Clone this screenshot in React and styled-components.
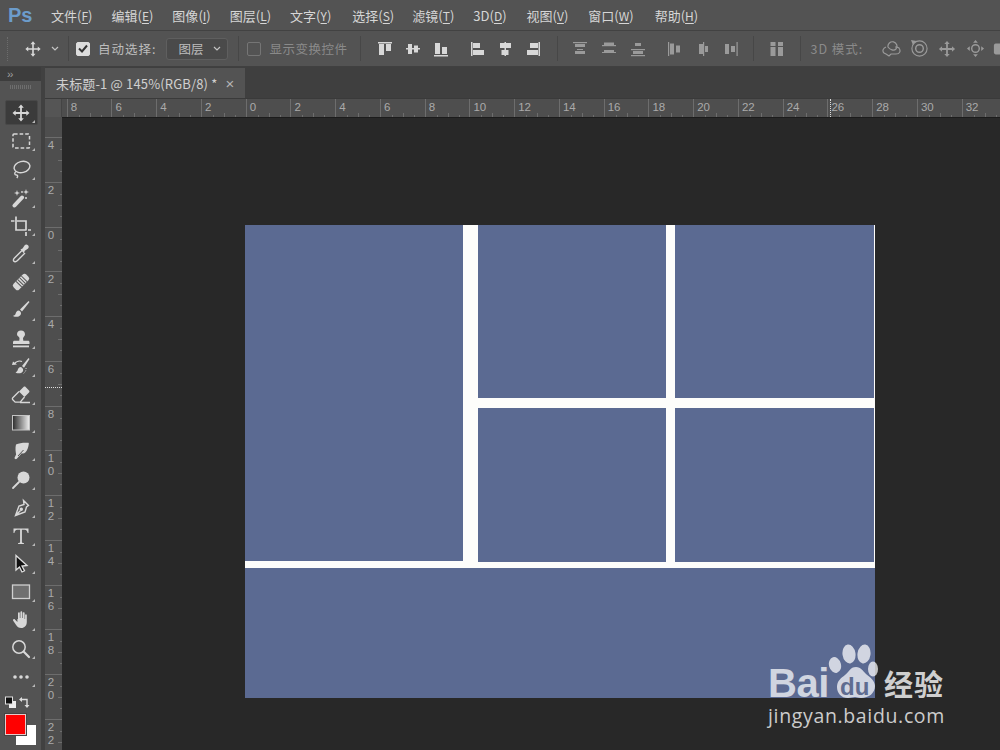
import React from 'react';
import styled, { createGlobalStyle } from 'styled-components';

const GlobalStyle = createGlobalStyle`
  html, body { margin: 0; padding: 0; background: #282828; }
  body { font-family: "Noto Sans CJK SC", "Liberation Sans", sans-serif; }
`;

const Window = styled.div`
  width: 1000px;
  height: 750px;
  position: relative;
  overflow: hidden;
  display: flex;
  flex-direction: column;
  background: #414141;
`;

// top menu
const MenuBar = styled.div`
  height: 31px;
  flex: none;
  display: flex;
  align-items: center;
  background: #535353;
  border-bottom: 1px solid #424242;
  box-sizing: border-box;
`;

const Logo = styled.div`
  width: 51px;
  padding-left: 8px;
  box-sizing: border-box;
  font: bold 20px "Liberation Sans", sans-serif;
  color: #6c9ccb;
`;

const MenuItem = styled.span`
  margin-right: ${(p) => p.$gap}px;
  font-size: 13px;
  color: #d6d6d6;
  white-space: nowrap;
  u { text-underline-offset: 2px; font-size: 12px; }
`;

// options row
const OptionsBar = styled.div`
  height: 36px;
  flex: none;
  display: flex;
  align-items: center;
  background: #535353;
  border-bottom: 1px solid #404040;
  box-sizing: border-box;
  overflow: hidden;
`;

const Grip = styled.div`
  width: 1px;
  height: 24px;
  margin: 0 16px 0 7px;
  border-left: 1px dotted #6c6c6c;
`;

const OptionIcon = styled.svg`
  flex: none;
  width: ${(p) => p.$w || 16}px;
  height: ${(p) => p.$h || 16}px;
  margin-right: ${(p) => p.$mr || 0}px;
  color: ${(p) => (p.$dim ? '#9a9a9a' : '#d8d8d8')};
`;

const Caret = styled.svg`
  flex: none;
  width: 8px;
  height: 5px;
  margin-right: ${(p) => p.$mr || 0}px;
  color: #c4c4c4;
`;

const Sep = styled.div`
  flex: none;
  width: 1px;
  height: 25px;
  margin-right: ${(p) => p.$mr}px;
  background: #474747;
`;

const CheckBox = styled.div`
  flex: none;
  width: 14px;
  height: 14px;
  margin-right: ${(p) => p.$mr}px;
  border-radius: 2px;
  display: flex;
  align-items: center;
  justify-content: center;
  box-sizing: border-box;
  background: ${(p) => (p.$on ? '#dcdcdc' : 'transparent')};
  border: 1px solid ${(p) => (p.$on ? '#dcdcdc' : '#757575')};
`;

const OptionLabel = styled.span`
  flex: none;
  margin-right: ${(p) => p.$mr}px;
  font-size: 12.5px;
  letter-spacing: ${(p) => p.$sp || 0}px;
  white-space: nowrap;
  color: ${(p) => (p.$dim ? '#8a8a8a' : '#bdbdbd')};
`;

const LayerSelect = styled.div`
  flex: none;
  width: 62px;
  height: 22px;
  margin-right: 10px;
  padding: 0 6px 0 11px;
  box-sizing: border-box;
  display: flex;
  align-items: center;
  justify-content: space-between;
  background: #4a4a4a;
  border: 1px solid #5f5f5f;
  border-radius: 3px;
  font-size: 12.5px;
  color: #bdbdbd;
`;

// below the options
const Body = styled.div`
  flex: 1;
  min-height: 0;
  display: flex;
`;

const ToolPanel = styled.div`
  width: 41px;
  flex: none;
  margin-right: 4px;
  display: flex;
  flex-direction: column;
  background: #535353;
`;

const PanelHead = styled.div`
  height: 14px;
  flex: none;
  padding-left: 7px;
  background: #3d3d3d;
  font: 11px/14px "Liberation Sans", sans-serif;
  letter-spacing: -1px;
  color: #a0a0a0;
`;

const PanelGrip = styled.div`
  height: 4px;
  margin: 4px 10px 10px;
  flex: none;
  background: repeating-linear-gradient(90deg, #6e6e6e 0 1px, transparent 1px 2px);
`;

const ToolButton = styled.div`
  height: 28.2px;
  flex: none;
  position: relative;
  display: flex;
  align-items: center;
  justify-content: center;
  color: #d8d8d8;
  &::before {
    content: '';
    position: absolute;
    left: 5px;
    right: 3px;
    top: 1px;
    bottom: 2px;
    border-radius: 2px;
    background: ${(p) => (p.$active ? '#3b3b3b' : 'transparent')};
    border: ${(p) => (p.$active ? '1px solid #484848' : 'none')};
  }
  &::after {
    content: '';
    position: absolute;
    right: 6px;
    bottom: 4px;
    border-style: solid;
    border-width: 0 0 3px 3px;
    border-color: transparent transparent ${(p) => (p.$corner ? '#b8b8b8' : 'transparent')} transparent;
  }
`;

const ToolIcon = styled.svg`
  position: relative;
  width: 20px;
  height: 20px;
`;

const SwatchArea = styled.div`
  margin-top: 5px;
  padding: 0 5px;
  display: flex;
  flex-direction: column;
`;

const SwatchTop = styled.div`
  height: 16px;
  display: flex;
  justify-content: space-between;
  padding-right: 5px;
`;

const SwatchStack = styled.div`
  position: relative;
  margin-top: 2px;
  width: 32px;
  height: 32px;
`;

const ForeSwatch = styled.div`
  position: absolute;
  left: 0;
  top: 0;
  z-index: 1;
  width: 21px;
  height: 21px;
  box-sizing: border-box;
  background: #ff0000;
  border: 1px solid #e8c8c8;
  outline: 1px solid #444;
`;

const BackSwatch = styled.div`
  position: absolute;
  left: 11px;
  top: 11px;
  width: 20px;
  height: 20px;
  background: #ffffff;
`;

const DocColumn = styled.div`
  flex: 1;
  min-width: 0;
  display: flex;
  flex-direction: column;
`;

const TabBar = styled.div`
  height: 32px;
  flex: none;
  display: flex;
  background: #3f3f3f;
  box-sizing: border-box;
  padding-top: 1px;
  border-bottom: 1px solid #3a3a3a;
`;

const Tab = styled.div`
  width: 200px;
  height: 30px;
  padding-left: 11px;
  box-sizing: border-box;
  display: flex;
  align-items: center;
  background: #535353;
  font-size: 13px;
  letter-spacing: 0.15px;
  color: #d0d0d0;
  white-space: nowrap;
`;

const TabClose = styled.span`
  margin-left: 8px;
  font: 15px "Liberation Sans", sans-serif;
  color: #b4b4b4;
`;

const RulerRow = styled.div`
  height: 18px;
  flex: none;
  display: flex;
  background: #4e4e4e;
  overflow: hidden;
  position: relative;
`;

const RulerCorner = styled.div`
  width: 17px;
  flex: none;
  margin-right: 4.7px;
  background: #555555;
  border-right: 1px solid #444;
  box-sizing: border-box;
`;

const RulerCell = styled.div`
  width: 44.75px;
  flex: none;
  box-sizing: border-box;
  padding: 1px 0 0 3px;
  border-left: 1px solid #6d6d6d;
  font: 11.5px/14px "Liberation Sans", sans-serif;
  color: #aaaaaa;
  background:
    linear-gradient(#6d6d6d, #6d6d6d) 11px 100% / 1px 2px no-repeat,
    linear-gradient(#6d6d6d, #6d6d6d) 22px 100% / 1px 4px no-repeat,
    linear-gradient(#6d6d6d, #6d6d6d) 33px 100% / 1px 2px no-repeat;
`;

const CursorMarkX = styled.div`
  position: absolute;
  left: 785px;
  top: 0;
  bottom: 0;
  border-left: 1px dotted #dddddd;
`;

const DocBody = styled.div`
  flex: 1;
  min-height: 0;
  display: flex;
`;

const SideRuler = styled.div`
  width: 17px;
  flex: none;
  padding-top: 20px;
  box-sizing: border-box;
  position: relative;
  background: #4e4e4e;
  overflow: hidden;
`;

const SideCell = styled.div`
  height: 44.75px;
  box-sizing: border-box;
  padding: 1px 0 0 2px;
  border-top: 1px solid #6d6d6d;
  font: 11.5px/13px "Liberation Sans", sans-serif;
  color: #aaaaaa;
  width: 17px;
  background:
    linear-gradient(#6d6d6d, #6d6d6d) 100% 11px / 2px 1px no-repeat,
    linear-gradient(#6d6d6d, #6d6d6d) 100% 22px / 4px 1px no-repeat,
    linear-gradient(#6d6d6d, #6d6d6d) 100% 33px / 2px 1px no-repeat;
  span { display: block; width: 8px; text-align: center; }
`;

const CursorMarkY = styled.div`
  position: absolute;
  left: 0;
  right: 0;
  top: 270px;
  border-top: 1px dotted #dddddd;
`;

const Workspace = styled.div`
  flex: 1;
  min-width: 0;
  padding: 107px 0 0 183px;
  box-sizing: border-box;
  background: #282828;
  border-top: 1px solid #1c1c1c;
`;

// the document: blue panels on white
const Canvas = styled.div`
  width: 630px;
  height: 473px;
  display: grid;
  grid-template-columns: 218px 15px 188px 9px 199px 1px;
  grid-template-rows: 173px 10px 154px 6px 130px;
  background: #fdfdfb;
`;

const Panel = styled.div`
  grid-column: ${(p) => p.$col};
  grid-row: ${(p) => p.$row};
  margin-bottom: ${(p) => p.$mb || 0}px;
  background: #5b6a92;
`;

// watermark
const Watermark = styled.div`
  position: absolute;
  left: 768px;
  top: 644px;
  width: 180px;
  height: 84px;
  color: rgba(255, 255, 255, 0.72);
`;

const WordBai = styled.span`
  position: absolute;
  left: 0;
  top: 17px;
  font: bold 40px/44px "Liberation Sans", sans-serif;
  letter-spacing: -0.5px;
`;

const Paw = styled.svg`
  position: absolute;
  left: 60px;
  top: 0;
  width: 50px;
  height: 56px;
`;

const WordDu = styled.span`
  position: absolute;
  left: 72px;
  top: 30px;
  font: bold 24px/26px "Liberation Sans", sans-serif;
  color: #5f6c90;
`;

const WordCn = styled.span`
  position: absolute;
  left: 116px;
  top: 19px;
  font: bold 29px/40px "Noto Sans CJK SC", sans-serif;
  letter-spacing: 1px;
  color: #cfcfcf;
  white-space: nowrap;
`;

const WordUrl = styled.span`
  position: absolute;
  left: 0;
  top: 60px;
  font: 19.5px/24px "Open Sans", "Liberation Sans", sans-serif;
  letter-spacing: 0.65px;
  color: #cccccc;
  white-space: nowrap;
`;

const menus = [
  ['文件', 'F', 19], ['编辑', 'E', 19], ['图像', 'I', 19], ['图层', 'L', 19], ['文字', 'Y', 21],
  ['选择', 'S', 18], ['滤镜', 'T', 19], ['3D', 'D', 20], ['视图', 'V', 20], ['窗口', 'W', 21], ['帮助', 'H', 0],
];

const fill = 'currentColor';

const MoveGlyph = () => (
  <path fill={fill} d="M10 1.5l2.8 3.2h-1.9v4.4h4.4V7.2L18.5 10l-3.2 2.8v-1.9h-4.4v4.4h1.9L10 18.5l-2.8-3.2h1.9v-4.4H4.7v1.9L1.5 10l3.2-2.8v1.9h4.4V4.7H7.2z" />
);

const tools = [
  { key: 'move', active: true, draw: <MoveGlyph /> },
  { key: 'marquee', draw: <rect x="2" y="3" width="16.500" height="14" rx="1" fill="none" stroke={fill} strokeWidth="1.5" strokeDasharray="3.6 2" /> },
  {
    key: 'lasso',
    draw: (
      <g fill="none" stroke={fill} strokeWidth="1.4">
        <ellipse cx="11" cy="8" rx="8" ry="5.6" transform="rotate(-14 11 8)" />
        <path d="M5 12.5c-2 1.5-1.5 3.5.5 3.5 1.500 0 1.500 1.500.3 3" />
      </g>
    ),
  },
  {
    key: 'wand',
    draw: (
      <g>
        <path d="M3.500 17.500L11 9.500" stroke={fill} strokeWidth="4" strokeLinecap="round" />
        <path fill={fill} d="M6 2l.7 2.300L9 5l-2.300.7L6 8l-.7-2.300L3 5l2.300-.7zM15 1l.7 2.300L18 4l-2.300.7L15 7l-.7-2.300L12 4l2.300-.7z" />
        <circle cx="11" cy="4" r=".9" fill={fill} />
        <circle cx="15" cy="10" r="1" fill={fill} />
      </g>
    ),
  },
  {
    key: 'crop',
    draw: <path fill="none" stroke={fill} strokeWidth="1.700" d="M0 5h3.500M5 .5V14h10M6 5h9v9.500M15 16v4M17 14h3" />,
  },
  {
    key: 'dropper',
    draw: (
      <g>
        <path fill="none" stroke={fill} strokeWidth="1.400" d="M11 6.500L3.500 14c-1.500 1.500-1.500 3 0 3.500 1 .5 2 0 3-1L14 9" />
        <path fill={fill} d="M9.500 5.500l2-1 2-3c1-1.200 2.500-1.200 3.500-.2s1 2.500-.2 3.500l-3 2-1 2.500z" />
      </g>
    ),
  },
  {
    key: 'heal',
    draw: (
      <g transform="rotate(-45 10 10)">
        <rect x="1" y="6" width="18" height="8" rx="2.500" fill={fill} />
        <path stroke="#535353" strokeWidth="1" d="M7 6v8M9.500 6v8M12 6v8M14.500 6v8" />
      </g>
    ),
  },
  {
    key: 'brush',
    draw: (
      <g fill={fill}>
        <path d="M17.500 1L9 9.500l2 2L18.500 2z" />
        <path d="M8 10.500c-2.500 0-3 2-3.500 3.500-.3 1-1.500 1.500-2.500 2 2.500 1.500 6 1 7.500-1 1-1.500.8-3.200-1.500-4.500z" />
      </g>
    ),
  },
  {
    key: 'stamp',
    draw: (
      <g fill={fill}>
        <path d="M10 1.500c2.500 0 4 1.700 4 3.700 0 1.700-1.500 2.500-2 4l.3 2.500h4.700c1 0 1.500.6 1.500 1.500V15H2v-1.800c0-.9.500-1.500 1.500-1.500h4.800L8.500 9c-.5-1.500-2.500-2-2.500-3.800 0-2 1.500-3.700 4-3.700z" />
        <rect x="2" y="16.500" width="16" height="1.800" />
      </g>
    ),
  },
  {
    key: 'history',
    draw: (
      <g>
        <path fill="none" stroke={fill} strokeWidth="1.200" d="M3 7c2.500-3 6-3.500 8-2.500" />
        <path fill={fill} d="M1 8l1-3.500L6 7.500zM17.500 1L11 9l2 1.800L18.500 2z" />
        <path fill={fill} d="M10 10c-2 0-3 1.500-3.300 3-.2 1-1 1.800-2.200 2.500 2.500 1.500 6 1 7.300-1 .8-1.500.5-3.300-1.800-4.500z" />
        <path fill="none" stroke={fill} strokeWidth="1" strokeDasharray="1 1.500" d="M15 11c.5 2-1 5-3.500 6" />
      </g>
    ),
  },
  {
    key: 'eraser',
    draw: (
      <g>
        <path fill={fill} d="M8 6.500l4.500-4.500c.6-.6 1.500-.6 2.100 0l3.400 3.400c.6.6.6 1.500 0 2.100L13.500 12z" />
        <path fill="none" stroke={fill} strokeWidth="1.300" d="M8 6.500L1.800 12.700c-.6.6-.6 1.500 0 2.100l2.400 2.400h5L13.500 12M9 17.500h10" />
      </g>
    ),
  },
  {
    key: 'gradient',
    draw: (
      <g>
        <defs>
          <linearGradient id="gradTool" x1="0" x2="1" y1="0" y2="0">
            <stop offset="0" stopColor="#2c2c2c" />
            <stop offset="1" stopColor="#f0f0f0" />
          </linearGradient>
        </defs>
        <rect x="1.500" y="2.500" width="17" height="14.500" fill="url(#gradTool)" stroke="#c4c4c4" strokeWidth="1" />
      </g>
    ),
  },
  {
    key: 'smudge',
    draw: (
      <g fill={fill}>
        <path d="M5 3.500c3-1.500 7-2 12-1.800.8 0 1 .6.8 1.300-.4 3-1.300 6.300-3.500 8.500-1 1-2.300 1.300-3.500.8l-5 5.500c-.6.700-1.400.6-1.900 0-.5-.5-.4-1.200 0-1.800l1.200-2.500C4.700 10.500 4 7.500 5 3.500z" />
        <path stroke="#535353" strokeWidth="1" fill="none" d="M7 15l5.500-6" />
      </g>
    ),
  },
  {
    key: 'dodge',
    draw: (
      <g>
        <circle cx="12.500" cy="7.500" r="6" fill={fill} />
        <path stroke={fill} strokeWidth="1.800" strokeLinecap="round" d="M8 12l-6 6" />
      </g>
    ),
  },
  {
    key: 'pen',
    draw: (
      <g fill="none" stroke={fill} strokeWidth="1.400">
        <path d="M12.500 2.500l5 5-2 1.500-1.500 5-9.500 3.500 3.500-9.500 5-1.500zM4.500 17.500l5-5" />
        <circle cx="10.300" cy="11.300" r="1" fill={fill} />
      </g>
    ),
  },
  {
    key: 'type',
    draw: <path fill={fill} stroke="none" d="M2.500 2.500h15v4.500h-.9c-.3-2-1-3.300-3-3.300h-2.700v12.200c0 .8.600 1 2 1.100V18H7.100v-1c1.400-.1 2-.3 2-1.100V3.700H6.400c-2 0-2.700 1.300-3 3.300h-.9z" />,
  },
  {
    key: 'path',
    draw: <path fill="#111" stroke="#e0e0e0" strokeWidth="1.300" d="M5 1.500v14.500l3.500-3 2.500 5 2.500-1.200-2.500-4.800 5-.5z" />,
  },
  {
    key: 'shape',
    draw: <rect x="1.500" y="3" width="17" height="13.500" fill="#6f6f6f" stroke="#cfcfcf" strokeWidth="1.300" />,
  },
  {
    key: 'hand',
    draw: (
      <path fill={fill} d="M7 9V3.300c0-1.300 1.800-1.300 1.800 0V8h.6V2.300c0-1.300 1.800-1.300 1.800 0V8h.6V3.200c0-1.300 1.800-1.300 1.800 0V9h.5V5.300c0-1.300 1.700-1.300 1.700 0V12c0 3.500-2.300 6-5.500 6-2.700 0-4-1-5.200-3L2.200 10.700c-.7-1.200.8-2.200 1.700-1.200L6.400 12V9z" />
    ),
  },
  {
    key: 'zoom',
    draw: (
      <g fill="none" stroke={fill}>
        <circle cx="8" cy="8" r="6.200" strokeWidth="1.500" />
        <path strokeWidth="2.200" strokeLinecap="round" d="M12.800 12.800l5.200 5.200" />
      </g>
    ),
  },
  {
    key: 'more',
    draw: (
      <g fill={fill}>
        <circle cx="4" cy="10" r="1.800" />
        <circle cx="10" cy="10" r="1.800" />
        <circle cx="16" cy="10" r="1.800" />
      </g>
    ),
  },
];

// align / distribute buttons, each drawn from a handful of bars: [x, y, w, h]
const alignGroups = [
  [
    { mr: 12, w: 16, bars: [[1, 1, 14, 1.500], [2, 3, 5, 11], [9, 3, 5, 7]] },
    { mr: 12, w: 16, bars: [[1, 7, 14, 1.500], [3, 3, 4, 10], [9, 4.500, 4, 7]] },
    { mr: 21, w: 16, bars: [[1, 14, 14, 1.500], [2, 2, 5, 11], [9, 6, 5, 7]] },
  ],
  [
    { mr: 13, w: 15, bars: [[1, 1, 1.500, 14], [3, 2, 7, 5], [3, 9, 11, 5]] },
    { mr: 13, w: 15, bars: [[6.500, 1, 1.500, 14], [2, 2, 11, 5], [3.500, 9, 7, 5]] },
    { mr: 16, w: 15, bars: [[12.500, 1, 1.500, 14], [4, 2, 8, 5], [1, 9, 11, 5]] },
  ],
  [
    { mr: 13, w: 16, dim: true, bars: [[1, 1, 14, 1.200], [3, 3, 10, 3], [3, 10, 10, 3], [5, 8, 6, 1]] },
    { mr: 13, w: 16, dim: true, bars: [[1, 4, 14, 1.200], [3, 1.500, 10, 2.500], [3, 9, 10, 3], [1, 11, 14, 1]] },
    { mr: 21, w: 16, dim: true, bars: [[5, 2, 6, 3], [1, 8, 14, 1.200], [3, 10, 10, 3], [1, 14, 14, 1.200]] },
  ],
  [
    { mr: 14, w: 15, dim: true, bars: [[1, 1, 1.200, 14], [3, 2.500, 4, 11], [9, 4.500, 4, 7]] },
    { mr: 13, w: 15, dim: true, bars: [[3, 3, 4, 10], [7, 1, 1.200, 14], [9, 5, 3, 6]] },
    { mr: 14, w: 15, dim: true, bars: [[1, 3, 4, 10], [7, 5, 4, 6], [12.500, 1, 1.200, 14]] },
  ],
];

const AlignButton = ({ item }) => (
  <OptionIcon viewBox={`0 0 ${item.w} 16`} $w={item.w} $mr={item.mr} $dim={item.dim}>
    {item.bars.map((b, i) => (
      <rect key={i} x={b[0]} y={b[1]} width={b[2]} height={b[3]} fill="currentColor" />
    ))}
  </OptionIcon>
);

const DownCaret = ({ mr }) => (
  <Caret viewBox="0 0 8 5" $mr={mr}>
    <path d="M1 1l3 3 3-3" fill="none" stroke="currentColor" strokeWidth="1.200" />
  </Caret>
);

const hLabels = [8, 6, 4, 2, 0, 2, 4, 6, 8, 10, 12, 14, 16, 18, 20, 22, 24, 26, 28, 30, 32];
const vLabels = ['4', '2', '0', '2', '4', '6', '8', '10', '12', '14', '16', '18', '20', '22'];

const App = () => {
  return (
    <Window>
      <GlobalStyle />
      <MenuBar>
        <Logo>Ps</Logo>
        {menus.map(([name, key, gap]) => (
          <MenuItem key={name} $gap={gap}>
            {name}(<u>{key}</u>)
          </MenuItem>
        ))}
      </MenuBar>

      <OptionsBar>
        <Grip />
        <OptionIcon viewBox="0 0 20 20" $w={18} $h={18} $mr={9}>
          <MoveGlyph />
        </OptionIcon>
        <DownCaret mr={9} />
        <Sep $mr={7} />
        <CheckBox $on $mr={8}>
          <svg width="10" height="9" viewBox="0 0 10 9">
            <path d="M1 4.500l3 3 5-6" fill="none" stroke="#333" strokeWidth="2" />
          </svg>
        </CheckBox>
        <OptionLabel $mr={10} $sp={1}>自动选择:</OptionLabel>
        <LayerSelect>
          图层
          <DownCaret />
        </LayerSelect>
        <Sep $mr={8} />
        <CheckBox $mr={8} />
        <OptionLabel $mr={12} $sp={0.5} $dim>显示变换控件</OptionLabel>
        <Sep $mr={16} />
        {alignGroups.slice(0, 2).map((group) => group.map((item, i) => <AlignButton key={i} item={item} />))}
        <Sep $mr={14} />
        {alignGroups.slice(2).map((group) => group.map((item, i) => <AlignButton key={i} item={item} />))}
        <Sep $mr={16} />
        <OptionIcon viewBox="0 0 14 16" $w={14} $mr={16} $dim>
          <rect x="0.500" y="1" width="5" height="4" fill="currentColor" />
          <rect x="8" y="1" width="5" height="4" fill="currentColor" />
          <rect x="0.500" y="6" width="5" height="9" fill="currentColor" />
          <rect x="8" y="6" width="5" height="9" fill="currentColor" />
        </OptionIcon>
        <Sep $mr={10} />
        <OptionLabel $mr={18} $dim $sp={1}>3D 模式:</OptionLabel>
        <OptionIcon viewBox="0 0 20 18" $w={20} $h={18} $mr={9} $dim>
          <path fill="none" stroke="currentColor" strokeWidth="1.200" d="M5 7c-3 1-4 4-2 6l2 1 3 2 2-2h5c4 0 5-3 3-6-1-1-3-1-4-1M7 7a4.500 4.500 0 1 1 8 2c-2 2-6 1-8-2z" />
        </OptionIcon>
        <OptionIcon viewBox="0 0 20 20" $w={19} $h={19} $mr={9} $dim>
          <circle cx="10" cy="10" r="8" fill="none" stroke="currentColor" strokeWidth="1.200" />
          <circle cx="10" cy="10" r="4" fill="none" stroke="currentColor" strokeWidth="1.500" />
          <path fill="currentColor" d="M1 1l6 1-4 4z" />
        </OptionIcon>
        <OptionIcon viewBox="0 0 20 20" $w={18} $h={18} $mr={10} $dim>
          <path fill="currentColor" d="M10 1l3 3.500h-2V9h4.500V7L19 10l-3.500 3v-2H11v4.500h2L10 19l-3-3.500h2V11H4.500v2L1 10l3.500-3v2H9V4.500H7z" />
        </OptionIcon>
        <OptionIcon viewBox="0 0 20 20" $w={19} $h={19} $mr={8} $dim>
          <circle cx="10" cy="10" r="4" fill="none" stroke="currentColor" strokeWidth="1.500" />
          <path fill="currentColor" d="M10 1l2.500 3h-5zM10 19l-2.500-3h5zM1 10l3-2.500v5zM19 10l-3 2.500v-5z" />
        </OptionIcon>
        <OptionIcon viewBox="0 0 20 20" $w={18} $h={18} $dim>
          <rect x="1" y="4" width="17" height="12" rx="2" fill="currentColor" />
        </OptionIcon>
      </OptionsBar>

      <Body>
        <ToolPanel>
          <PanelHead>››</PanelHead>
          <PanelGrip />
          {tools.map((tool) => (
            <ToolButton key={tool.key} $active={tool.active} $corner>
              <ToolIcon viewBox="0 0 20 20">{tool.draw}</ToolIcon>
            </ToolButton>
          ))}
          <SwatchArea>
            <SwatchTop>
              <svg width="12" height="13" viewBox="0 0 12 13">
                <rect x="4" y="5" width="7" height="7" fill="#eeeeee" />
                <rect x="0.500" y="1" width="7" height="7" fill="#111" stroke="#e0e0e0" />
              </svg>
              <svg width="12" height="12" viewBox="0 0 12 12">
                <path fill="none" stroke="#dddddd" strokeWidth="1.400" d="M1.500 3.500H8V10" />
                <path fill="#dddddd" d="M0 3.500L3 1v5zM8 12l-2.500-3h5z" />
              </svg>
            </SwatchTop>
            <SwatchStack>
              <ForeSwatch />
              <BackSwatch />
            </SwatchStack>
          </SwatchArea>
        </ToolPanel>

        <DocColumn>
          <TabBar>
            <Tab>
              未标题-1 @ 145%(RGB/8) *<TabClose>×</TabClose>
            </Tab>
          </TabBar>
          <RulerRow>
            <RulerCorner />
            {hLabels.map((n, i) => (
              <RulerCell key={i}>{n}</RulerCell>
            ))}
            <CursorMarkX />
          </RulerRow>
          <DocBody>
            <SideRuler>
              {vLabels.map((label, i) => (
                <SideCell key={i}>
                  {label.split('').map((d, j) => (
                    <span key={j}>{d}</span>
                  ))}
                </SideCell>
              ))}
              <CursorMarkY />
            </SideRuler>
            <Workspace>
              <Canvas>
                <Panel $col="1" $row="1 / 4" $mb={1} />
                <Panel $col="3" $row="1" />
                <Panel $col="5" $row="1" />
                <Panel $col="3" $row="3" />
                <Panel $col="5" $row="3" />
                <Panel $col="1 / 7" $row="5" />
              </Canvas>
            </Workspace>
          </DocBody>
        </DocColumn>
      </Body>

      <Watermark>
        <WordBai>Bai</WordBai>
        <Paw viewBox="0 0 50 56">
          <g fill="currentColor">
            <ellipse cx="7" cy="21" rx="6" ry="8" transform="rotate(-15 7 21)" />
            <ellipse cx="21" cy="10" rx="6.500" ry="9.500" transform="rotate(-8 21 10)" />
            <ellipse cx="36" cy="10" rx="6.500" ry="9.500" transform="rotate(8 36 10)" />
            <ellipse cx="45" cy="25" rx="5" ry="7.500" />
            <path d="M28 23c5 0 7 4 10 7 4 3 9 7 9 12 0 7-6 12-14 12-3 0-4-1-6-1s-4 1-7 1c-7 0-11-5-11-11 0-6 4-9 8-12 4-3 5-8 11-8z" />
          </g>
        </Paw>
        <WordDu>du</WordDu>
        <WordCn>经验</WordCn>
        <WordUrl>jingyan.baidu.com</WordUrl>
      </Watermark>
    </Window>
  );
};

export default App;
